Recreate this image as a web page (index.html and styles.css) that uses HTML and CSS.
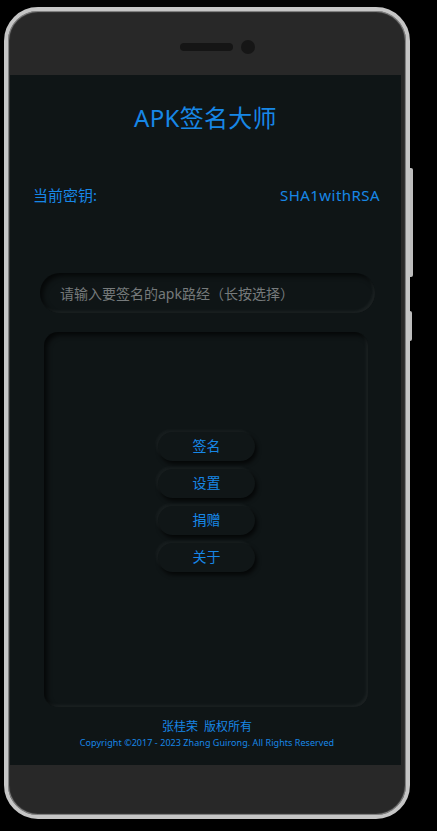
FILE: index.html
```html
<!DOCTYPE html>
<html lang="zh">
<head>
<meta charset="utf-8">
<title>APK签名大师</title>
<link rel="stylesheet" href="styles.css">
</head>
<body>
<div class="phone">
  <span class="side-btn side-btn-1"></span>
  <span class="side-btn side-btn-2"></span>
  <div class="top-bezel">
    <span class="speaker"></span>
    <span class="camera"></span>
  </div>
  <div class="screen">
    <h1 class="title">APK签名大师</h1>
    <div class="key-row">
      <span class="key-label">当前密钥:</span>
      <span class="key-value">SHA1withRSA</span>
    </div>
    <div class="path-input">请输入要签名的apk路经（长按选择）</div>
    <div class="panel">
      <div class="menu">
        <div class="menu-btn">签名</div>
        <div class="menu-btn">设置</div>
        <div class="menu-btn">捐赠</div>
        <div class="menu-btn">关于</div>
      </div>
    </div>
    <div class="footer">
      <div class="footer-owner">张桂荣&nbsp;&nbsp;版权所有</div>
      <div class="footer-copy">Copyright ©2017 - 2023 Zhang Guirong. All Rights Reserved</div>
    </div>
  </div>
</div>
</body>
</html>
```
FILE: styles.css
```css
* { box-sizing: border-box; }
html, body {
  margin: 0;
  padding: 0;
  background: #000;
  width: 437px;
  height: 831px;
  overflow: hidden;
  font-family: "Noto Sans", "Noto Sans CJK SC", sans-serif;
}
.phone {
  position: relative;
  margin: 7px 0 0 4px;
  width: 406px;
  height: 812px;
  border: 4px solid #c5c5c5;
  border-radius: 34px;
  background: #282828;
  padding: 0 5px 50px 2px;
  display: flex;
  flex-direction: column;
  box-shadow: inset 0 0 1px 1px #8a8a8a;
}
.side-btn {
  position: absolute;
  right: -7px;
  width: 3px;
  background: #bdbdbd;
  border-radius: 0 2px 2px 0;
}
.side-btn-1 { top: 157px; height: 109px; }
.side-btn-2 { top: 300px; height: 30px; width: 2px; right: -6px; }
.top-bezel {
  height: 64px;
  display: flex;
  align-items: center;
  padding: 8px 0 0 170px;
}
.speaker {
  width: 53px;
  height: 8px;
  border-radius: 4px;
  background: #151515;
}
.camera {
  width: 14px;
  height: 14px;
  border-radius: 50%;
  background: #161616;
  margin-left: 8px;
}
.screen {
  flex: 1;
  background: #0f1516;
  display: flex;
  flex-direction: column;
}
.title {
  margin: 29px 0 0 0;
  font-size: 24px;
  line-height: 28px;
  font-weight: 400;
  color: #1787e6;
  text-align: center;
  letter-spacing: 0.3px;
}
.key-row {
  margin-top: 53px;
  display: flex;
  justify-content: space-between;
  padding: 0 21px 0 23px;
  font-size: 15px;
  line-height: 20px;
  color: #1787e6;
}
.key-value {
  letter-spacing: 0.45px;
}
.path-input {
  margin: 68px 0 0 30px;
  width: 335px;
  height: 40px;
  border-radius: 20px;
  padding-left: 20px;
  display: flex;
  align-items: center;
  font-size: 14px;
  color: #767a7b;
  background: #0f1516;
  box-shadow: inset 3px 3px 5px rgba(0, 0, 0, 0.65), inset -2px -2px 3px rgba(255, 255, 255, 0.06);
}
.panel {
  margin: 19px 0 0 34px;
  width: 324px;
  height: 375px;
  border-radius: 14px;
  background: #0f1516;
  box-shadow: inset 3px 3px 5px rgba(0, 0, 0, 0.7), inset -2px -2px 3px rgba(255, 255, 255, 0.06);
  padding-top: 100px;
}
.menu {
  display: flex;
  flex-direction: column;
  align-items: center;
  gap: 8px;
  padding-left: 1px;
}
.menu-btn {
  width: 97px;
  height: 29px;
  border-radius: 15px;
  display: flex;
  align-items: center;
  justify-content: center;
  font-size: 14px;
  line-height: 20px;
  padding-bottom: 2px;
  color: #1787e6;
  background: #101617;
  box-shadow: 2px 3px 4px rgba(0, 0, 0, 0.7), -2px -2px 3px rgba(255, 255, 255, 0.045);
}
.footer {
  margin-top: 12px;
  text-align: center;
  color: #1787e6;
  padding-left: 3px;
}
.footer-owner {
  font-size: 12px;
  line-height: 16px;
}
.footer-copy {
  margin-top: 2px;
  font-size: 9px;
  line-height: 12px;
  letter-spacing: 0.05px;
}
```
